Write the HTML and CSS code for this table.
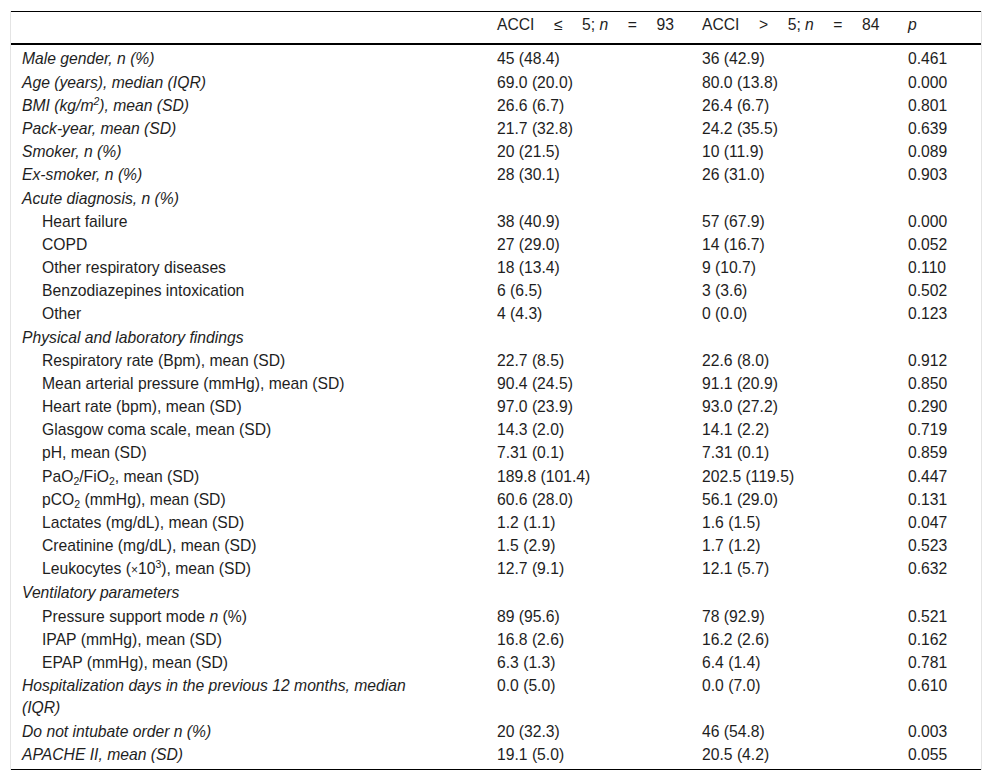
FILE: index.html
```html
<!DOCTYPE html>
<html lang="en">
<head>
<meta charset="utf-8">
<title>ACCI table</title>
<link rel="stylesheet" href="styles.css">
</head>
<body>
<div class="frame">
<table class="data">
<colgroup>
<col class="c1"><col class="c2"><col class="c3"><col class="c4">
</colgroup>
<thead>
<tr>
<th></th>
<th><span class="hd">ACCI<span class="op">≤</span>5; <i>n</i><span class="op">=</span>93</span></th>
<th><span class="hd">ACCI<span class="op">&gt;</span>5; <i>n</i><span class="op">=</span>84</span></th>
<th><i>p</i></th>
</tr>
</thead>
<tbody>
<tr class="first"><td class="lv1">Male gender, n (%)</td><td>45 (48.4)</td><td>36 (42.9)</td><td>0.461</td></tr>
<tr><td class="lv1">Age (years), median (IQR)</td><td>69.0 (20.0)</td><td>80.0 (13.8)</td><td>0.000</td></tr>
<tr><td class="lv1">BMI (kg/m<sup>2</sup>), mean (SD)</td><td>26.6 (6.7)</td><td>26.4 (6.7)</td><td>0.801</td></tr>
<tr><td class="lv1">Pack-year, mean (SD)</td><td>21.7 (32.8)</td><td>24.2 (35.5)</td><td>0.639</td></tr>
<tr><td class="lv1">Smoker, n (%)</td><td>20 (21.5)</td><td>10 (11.9)</td><td>0.089</td></tr>
<tr><td class="lv1">Ex-smoker, n (%)</td><td>28 (30.1)</td><td>26 (31.0)</td><td>0.903</td></tr>
<tr><td class="lv1">Acute diagnosis, n (%)</td><td></td><td></td><td></td></tr>
<tr><td class="lv2">Heart failure</td><td>38 (40.9)</td><td>57 (67.9)</td><td>0.000</td></tr>
<tr><td class="lv2">COPD</td><td>27 (29.0)</td><td>14 (16.7)</td><td>0.052</td></tr>
<tr><td class="lv2">Other respiratory diseases</td><td>18 (13.4)</td><td>9 (10.7)</td><td>0.110</td></tr>
<tr><td class="lv2">Benzodiazepines intoxication</td><td>6 (6.5)</td><td>3 (3.6)</td><td>0.502</td></tr>
<tr><td class="lv2">Other</td><td>4 (4.3)</td><td>0 (0.0)</td><td>0.123</td></tr>
<tr><td class="lv1">Physical and laboratory findings</td><td></td><td></td><td></td></tr>
<tr><td class="lv2">Respiratory rate (Bpm), mean (SD)</td><td>22.7 (8.5)</td><td>22.6 (8.0)</td><td>0.912</td></tr>
<tr><td class="lv2">Mean arterial pressure (mmHg), mean (SD)</td><td>90.4 (24.5)</td><td>91.1 (20.9)</td><td>0.850</td></tr>
<tr><td class="lv2">Heart rate (bpm), mean (SD)</td><td>97.0 (23.9)</td><td>93.0 (27.2)</td><td>0.290</td></tr>
<tr><td class="lv2">Glasgow coma scale, mean (SD)</td><td>14.3 (2.0)</td><td>14.1 (2.2)</td><td>0.719</td></tr>
<tr><td class="lv2">pH, mean (SD)</td><td>7.31 (0.1)</td><td>7.31 (0.1)</td><td>0.859</td></tr>
<tr><td class="lv2">PaO<sub>2</sub>/FiO<sub>2</sub>, mean (SD)</td><td>189.8 (101.4)</td><td>202.5 (119.5)</td><td>0.447</td></tr>
<tr><td class="lv2">pCO<sub>2</sub> (mmHg), mean (SD)</td><td>60.6 (28.0)</td><td>56.1 (29.0)</td><td>0.131</td></tr>
<tr><td class="lv2">Lactates (mg/dL), mean (SD)</td><td>1.2 (1.1)</td><td>1.6 (1.5)</td><td>0.047</td></tr>
<tr><td class="lv2">Creatinine (mg/dL), mean (SD)</td><td>1.5 (2.9)</td><td>1.7 (1.2)</td><td>0.523</td></tr>
<tr><td class="lv2">Leukocytes (<span class="times">×</span>10<sup>3</sup>), mean (SD)</td><td>12.7 (9.1)</td><td>12.1 (5.7)</td><td>0.632</td></tr>
<tr><td class="lv1">Ventilatory parameters</td><td></td><td></td><td></td></tr>
<tr><td class="lv2">Pressure support mode <i>n</i> (%)</td><td>89 (95.6)</td><td>78 (92.9)</td><td>0.521</td></tr>
<tr><td class="lv2">IPAP (mmHg), mean (SD)</td><td>16.8 (2.6)</td><td>16.2 (2.6)</td><td>0.162</td></tr>
<tr><td class="lv2">EPAP (mmHg), mean (SD)</td><td>6.3 (1.3)</td><td>6.4 (1.4)</td><td>0.781</td></tr>
<tr><td class="lv1">Hospitalization days in the previous 12 months, median (IQR)</td><td>0.0 (5.0)</td><td>0.0 (7.0)</td><td>0.610</td></tr>
<tr><td class="lv1">Do not intubate order n (%)</td><td>20 (32.3)</td><td>46 (54.8)</td><td>0.003</td></tr>
<tr class="last"><td class="lv1">APACHE II, mean (SD)</td><td>19.1 (5.0)</td><td>20.5 (4.2)</td><td>0.055</td></tr>
</tbody>
</table>
</div>
</body>
</html>
```

FILE: styles.css
```css
html, body {
  margin: 0;
  padding: 0;
  background: #ffffff;
}

body {
  font-family: "Liberation Sans", Arial, sans-serif;
  font-size: 15.7px;
  color: #1e1e1e;
}

.frame {
  margin: 11px 0 0 10px;
  width: 970px;
  border-left: 1px solid #e4e4e4;
  border-right: 1px solid #e4e4e4;
}

.data {
  width: 970px;
  table-layout: fixed;
  border-collapse: separate;
  border-spacing: 0;
}

.c1 { width: 475px; }
.c2 { width: 205px; }
.c3 { width: 206px; }
.c4 { width: 84px; }

.data th,
.data td {
  text-align: left;
  vertical-align: top;
  line-height: 22.3px;
  padding: 0.45px 11px;
  font-weight: normal;
}

.data th {
  border-top: 1px solid #000;
  border-bottom: 2px solid #000;
  padding-top: 2.2px;
  padding-bottom: 6.5px;
  white-space: nowrap;
}

.hd .op {
  display: inline-block;
  margin: 0 19.5px;
}

.data td.lv1 {
  font-style: italic;
  padding-right: 50px;
}

.data td.lv2 {
  padding-left: 31px;
}

.data tr.first td {
  padding-top: 3.5px;
}

.data tr.last td {
  padding-bottom: 3.2px;
  border-bottom: 1px solid #000;
}

sup, sub {
  font-size: 10.5px;
  line-height: 0;
  position: relative;
  vertical-align: baseline;
}

sup { top: -6px; }
sub { top: 3.5px; }

.times {
  font-size: 12px;
}
```
